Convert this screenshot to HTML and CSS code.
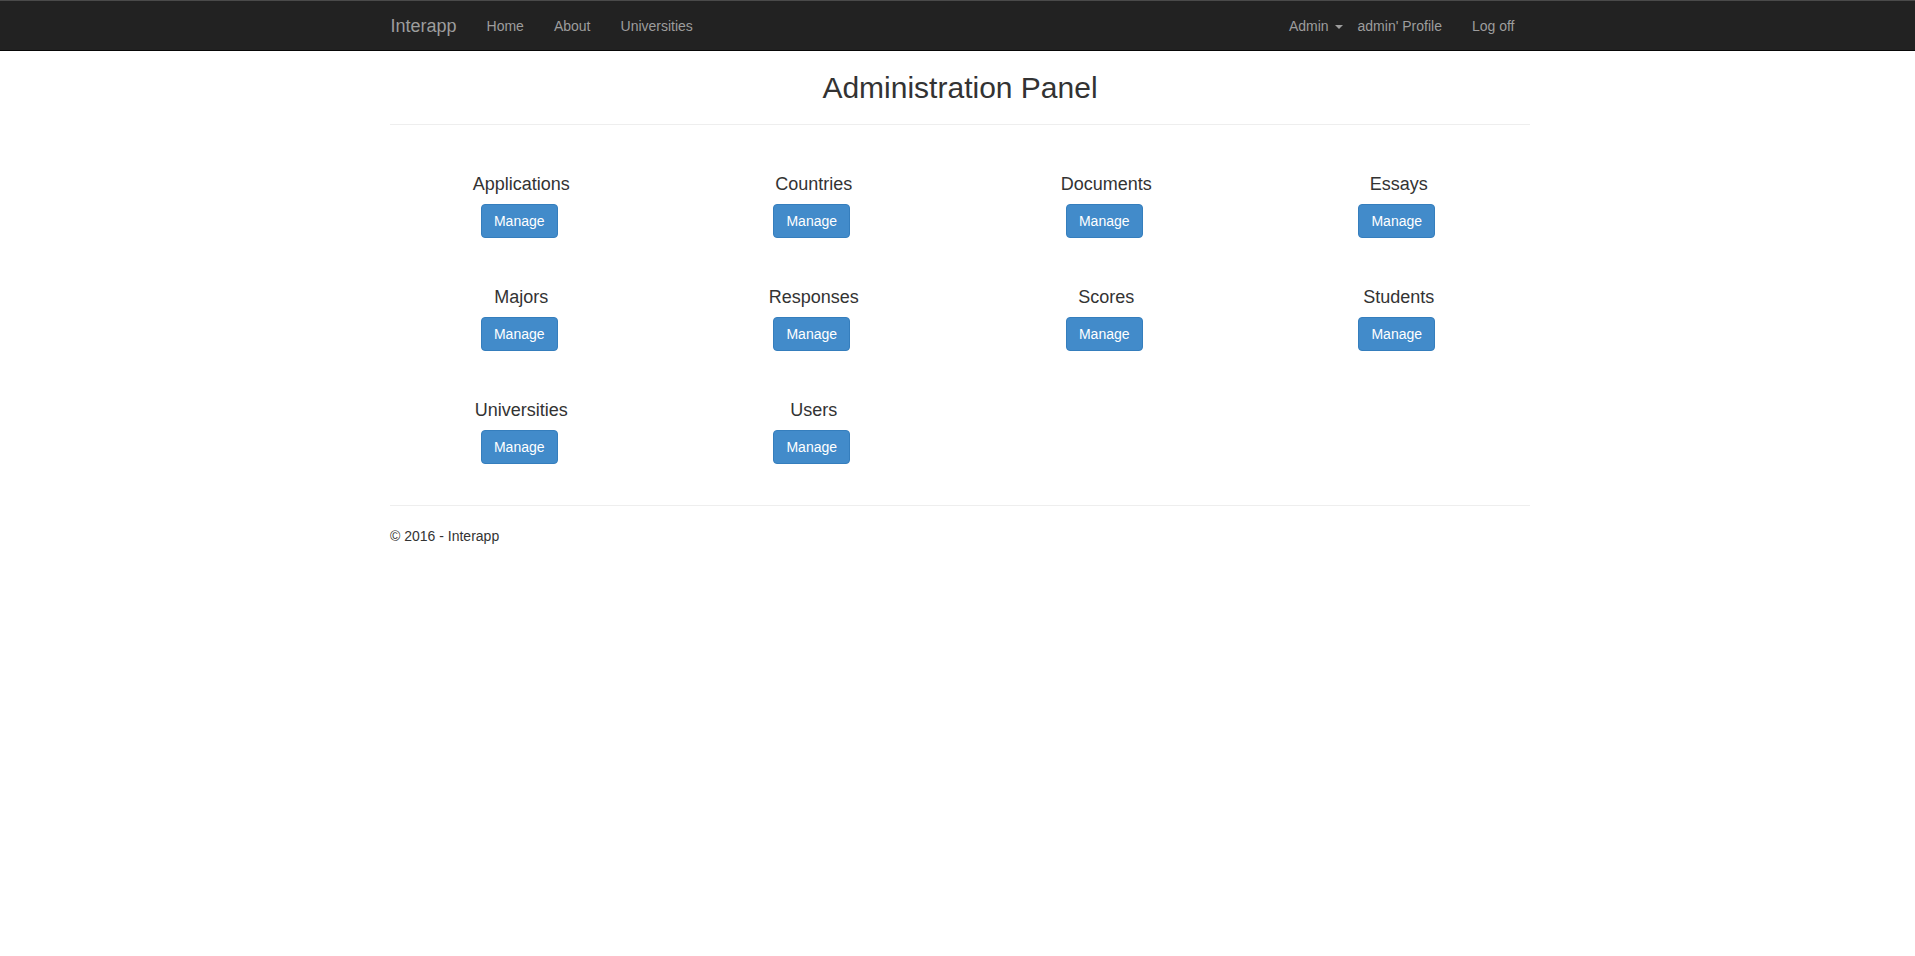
FILE: index.html
```html
<!DOCTYPE html>
<html lang="en">
<head>
<meta charset="utf-8">
<title>Administration Panel - Interapp</title>
<link rel="stylesheet" href="styles.css">
</head>
<body>
<nav class="navbar">
  <div class="container nav-inner">
    <div class="nav-left">
      <a class="brand" href="#">Interapp</a>
      <ul class="nav">
        <li><a href="#">Home</a></li>
        <li><a href="#">About</a></li>
        <li><a href="#">Universities</a></li>
      </ul>
    </div>
    <ul class="nav nav-right">
      <li><a href="#" class="dropdown-toggle">Admin <span class="caret"></span></a></li>
      <li><a href="#" class="tight">admin' Profile</a></li>
      <li><a href="#">Log off</a></li>
    </ul>
  </div>
</nav>
<div class="container body-content">
  <h2 class="title">Administration Panel</h2>
  <hr class="rule">
  <div class="grid">
    <div class="cell"><h4>Applications</h4><a class="btn" href="#">Manage</a></div>
    <div class="cell"><h4>Countries</h4><a class="btn" href="#">Manage</a></div>
    <div class="cell"><h4>Documents</h4><a class="btn" href="#">Manage</a></div>
    <div class="cell"><h4>Essays</h4><a class="btn" href="#">Manage</a></div>
    <div class="cell"><h4>Majors</h4><a class="btn" href="#">Manage</a></div>
    <div class="cell"><h4>Responses</h4><a class="btn" href="#">Manage</a></div>
    <div class="cell"><h4>Scores</h4><a class="btn" href="#">Manage</a></div>
    <div class="cell"><h4>Students</h4><a class="btn" href="#">Manage</a></div>
    <div class="cell"><h4>Universities</h4><a class="btn" href="#">Manage</a></div>
    <div class="cell"><h4>Users</h4><a class="btn" href="#">Manage</a></div>
  </div>
  <hr class="rule">
  <footer class="footer">
    <p>&copy; 2016 - Interapp</p>
  </footer>
</div>
</body>
</html>
```

FILE: styles.css
```css
* { box-sizing: border-box; }

html, body {
  margin: 0;
  padding: 0;
}

body {
  padding-left: 5px;
  font-family: "Liberation Sans", Arial, Helvetica, sans-serif;
  font-size: 14px;
  line-height: 20px;
  color: #333;
  background: #fff;
}

a { text-decoration: none; }

.container {
  width: 1170px;
  margin: 0 auto;
  padding: 0 15px;
}

/* Navbar */
.navbar {
  margin-left: -5px;
  background: #222;
  border-top: 1px solid #4a4a4a;
  border-bottom: 1px solid #080808;
  height: 51px;
}

.nav-inner {
  display: flex;
  justify-content: space-between;
  height: 49px;
  padding-left: 18px;
  padding-right: 13px;
}

.nav-left {
  display: flex;
}

.brand {
  display: block;
  margin-left: -15px;
  padding: 15px 15px 14px;
  font-size: 18px;
  line-height: 20px;
  color: #9d9d9d;
}

.nav {
  display: flex;
  list-style: none;
  margin: 0;
  padding: 0;
}

.nav a {
  display: block;
  padding: 15px 15px 14px;
  line-height: 20px;
  font-size: 14px;
  color: #9d9d9d;
}

.nav a.tight {
  padding-left: 0;
}

.caret {
  display: inline-block;
  width: 0;
  height: 0;
  margin-left: 2px;
  vertical-align: middle;
  border-top: 4px solid #9d9d9d;
  border-left: 4px solid transparent;
  border-right: 4px solid transparent;
}

/* Body */
.title {
  margin: 20px 0 10px;
  font-size: 30px;
  line-height: 33px;
  font-weight: 500;
  text-align: center;
  color: #333;
}

.rule {
  margin: 20px 0;
  border: 0;
  height: 0;
  border-top: 1px solid #eee;
}

.grid {
  display: grid;
  grid-template-columns: repeat(4, 1fr);
  row-gap: 40.2px;
  margin: 0 -15px;
  padding: 20px 0 21px;
}

.cell {
  text-align: center;
  padding: 0 15px;
}

.cell h4 {
  margin: 10px 0 9px;
  font-size: 18px;
  line-height: 19.8px;
  font-weight: 500;
  color: #333;
}

.btn {
  display: inline-block;
  padding: 6px 12px;
  font-size: 14px;
  line-height: 20px;
  color: #fff;
  background: #428bca;
  border: 1px solid #357ebd;
  border-radius: 4px;
  margin-right: 4px;
}

.footer p {
  margin: 0 0 10px;
}
```
